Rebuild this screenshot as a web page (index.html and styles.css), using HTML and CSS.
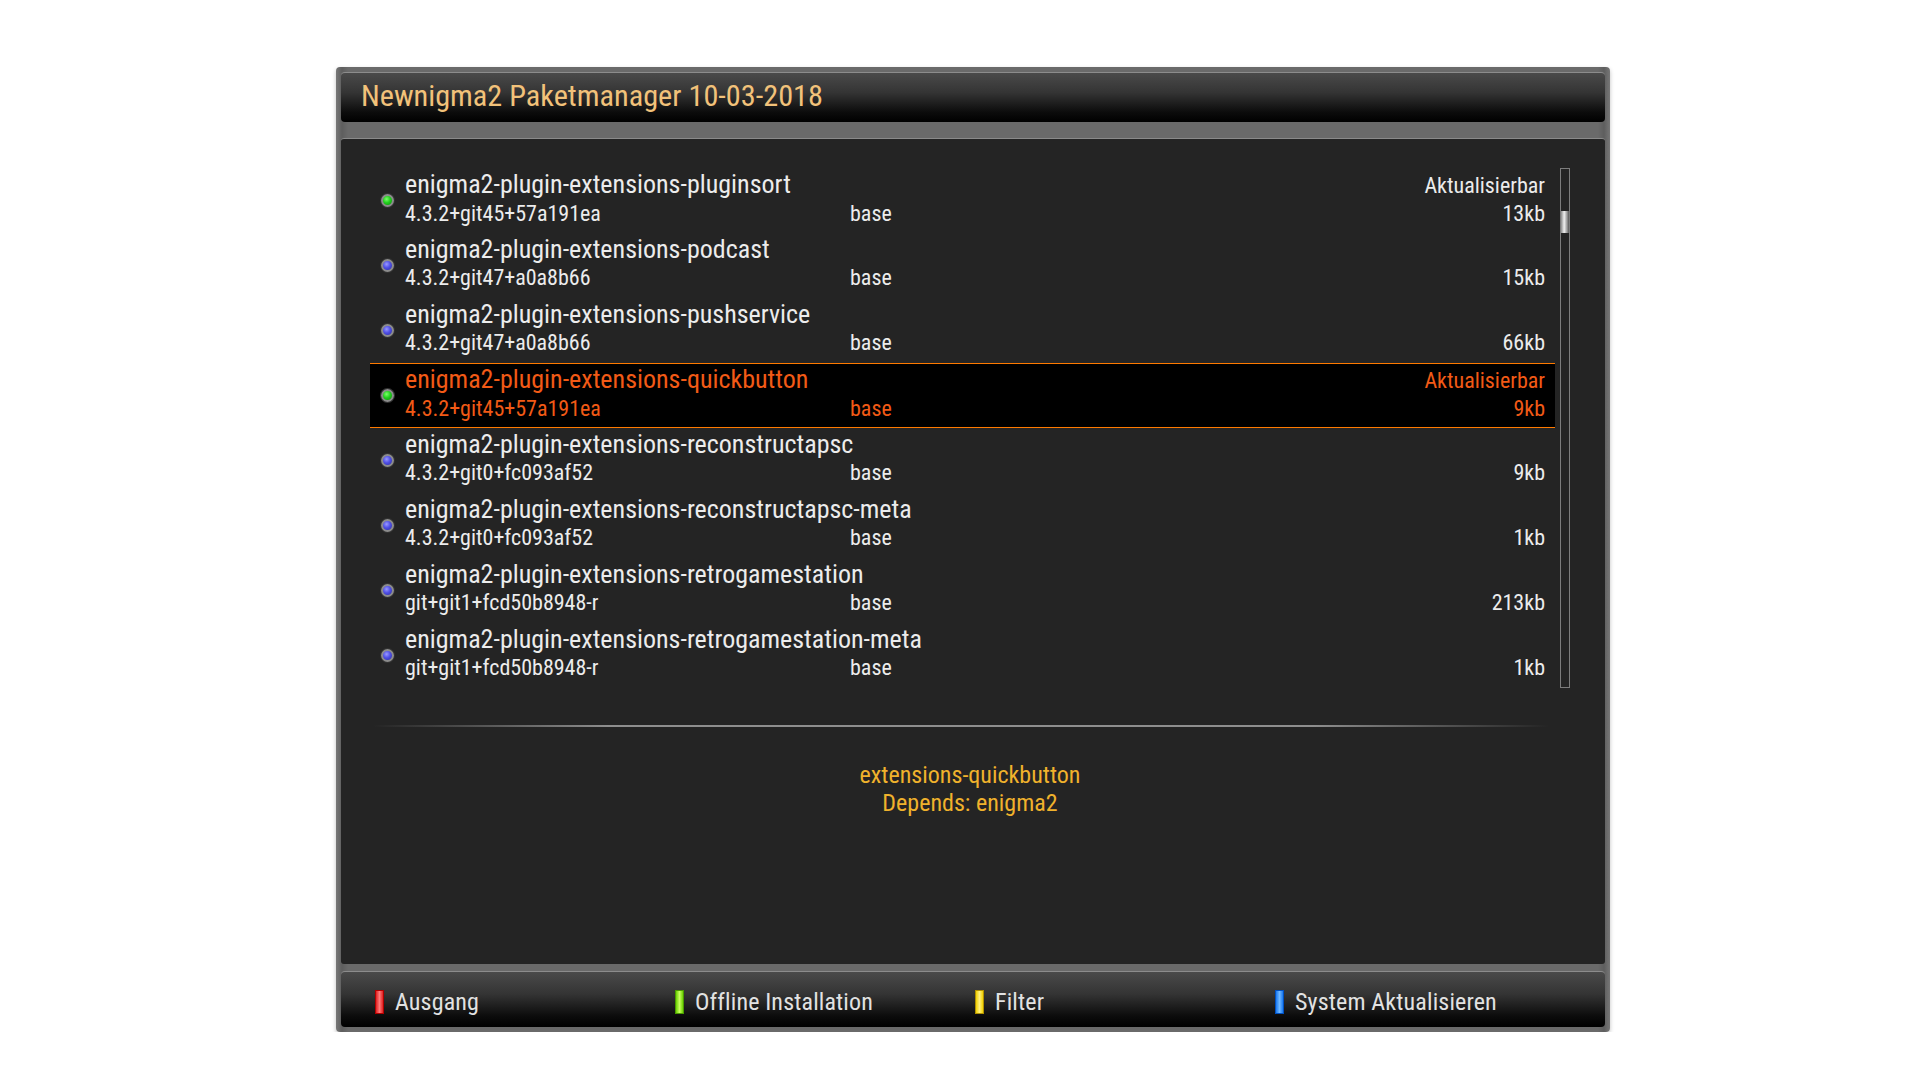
FILE: index.html
```html
<!DOCTYPE html>
<html lang="de">
<head>
  <meta charset="UTF-8">
  <title>Newnigma2 Paketmanager</title>
  <link rel="stylesheet" href="styles.css">
</head>
<body>

<div class="screen">
  <div class="titlebar">
    <h1>Newnigma2 Paketmanager 10-03-2018</h1>
  </div>

  <div class="content">
    <div class="listwrap">
      <ul class="list">
        <li class="row">
          <span class="dot green"></span>
          <div class="info">
            <div class="line1"><span class="name">enigma2-plugin-extensions-pluginsort</span><span class="status">Aktualisierbar</span></div>
            <div class="line2"><span class="version">4.3.2+git45+57a191ea</span><span class="feed">base</span><span class="size">13kb</span></div>
          </div>
        </li>
        <li class="row">
          <span class="dot blue"></span>
          <div class="info">
            <div class="line1"><span class="name">enigma2-plugin-extensions-podcast</span><span class="status"></span></div>
            <div class="line2"><span class="version">4.3.2+git47+a0a8b66</span><span class="feed">base</span><span class="size">15kb</span></div>
          </div>
        </li>
        <li class="row">
          <span class="dot blue"></span>
          <div class="info">
            <div class="line1"><span class="name">enigma2-plugin-extensions-pushservice</span><span class="status"></span></div>
            <div class="line2"><span class="version">4.3.2+git47+a0a8b66</span><span class="feed">base</span><span class="size">66kb</span></div>
          </div>
        </li>
        <li class="row selected">
          <span class="dot green"></span>
          <div class="info">
            <div class="line1"><span class="name">enigma2-plugin-extensions-quickbutton</span><span class="status">Aktualisierbar</span></div>
            <div class="line2"><span class="version">4.3.2+git45+57a191ea</span><span class="feed">base</span><span class="size">9kb</span></div>
          </div>
        </li>
        <li class="row">
          <span class="dot blue"></span>
          <div class="info">
            <div class="line1"><span class="name">enigma2-plugin-extensions-reconstructapsc</span><span class="status"></span></div>
            <div class="line2"><span class="version">4.3.2+git0+fc093af52</span><span class="feed">base</span><span class="size">9kb</span></div>
          </div>
        </li>
        <li class="row">
          <span class="dot blue"></span>
          <div class="info">
            <div class="line1"><span class="name">enigma2-plugin-extensions-reconstructapsc-meta</span><span class="status"></span></div>
            <div class="line2"><span class="version">4.3.2+git0+fc093af52</span><span class="feed">base</span><span class="size">1kb</span></div>
          </div>
        </li>
        <li class="row">
          <span class="dot blue"></span>
          <div class="info">
            <div class="line1"><span class="name">enigma2-plugin-extensions-retrogamestation</span><span class="status"></span></div>
            <div class="line2"><span class="version">git+git1+fcd50b8948-r</span><span class="feed">base</span><span class="size">213kb</span></div>
          </div>
        </li>
        <li class="row">
          <span class="dot blue"></span>
          <div class="info">
            <div class="line1"><span class="name">enigma2-plugin-extensions-retrogamestation-meta</span><span class="status"></span></div>
            <div class="line2"><span class="version">git+git1+fcd50b8948-r</span><span class="feed">base</span><span class="size">1kb</span></div>
          </div>
        </li>
      </ul>
      <div class="scrollbar"><div class="thumb"></div></div>
    </div>

    <div class="separator"></div>

    <div class="description">
      <div>extensions-quickbutton</div>
      <div>Depends: enigma2</div>
    </div>
  </div>

  <div class="buttonbar">
    <div class="button"><span class="key red"></span>Ausgang</div>
    <div class="button"><span class="key green"></span>Offline Installation</div>
    <div class="button"><span class="key yellow"></span>Filter</div>
    <div class="button"><span class="key blue"></span>System Aktualisieren</div>
  </div>
</div>

</body>
</html>
```

FILE: styles.css
```css
body {
  margin: 0;
  background: #fff;
  font-family: "Roboto Condensed", Roboto, "Liberation Sans", sans-serif;
  color: #ececec;
}
.screen {
  margin: 67px 0 0 336px;
  width: 1274px;
  height: 965px;
  box-sizing: border-box;
  padding: 5px 5px 5px 5px;
  background: linear-gradient(to right, #777 0, #5e5e5e 6px, #6a6a6a 12px, #6a6a6a calc(100% - 12px), #5e5e5e calc(100% - 6px), #777 100%);
  border-radius: 4px;
  display: flex;
  flex-direction: column;
  box-shadow: 0 2px 4px rgba(0, 0, 0, 0.25);
}
.titlebar {
  height: 50px;
  box-sizing: border-box;
  padding: 0 20px;
  border-radius: 4px;
  border-top: 1px solid #8c8c8c;
  background: linear-gradient(to bottom, #4a4a4a 0, #343434 40%, #0c0c0c 80%, #000 100%);
}
.titlebar h1 {
  margin: 0;
  font-size: 30.25px;
  font-weight: normal;
  line-height: 46px;
  color: #f2c27a;
}
.content {
  margin-top: 16px;
  height: 826px;
  box-sizing: border-box;
  border-top: 1px solid #8a8a8a;
  border-radius: 3px;
  background: #242424;
  padding: 29px 0 0 29px;
}
.listwrap {
  display: flex;
  gap: 5px;
  align-items: flex-start;
}
.list {
  list-style: none;
  margin: 0;
  padding: 0;
  width: 1185px;
}
.row {
  height: 65px;
  display: flex;
  align-items: center;
}
.row.selected {
  background: #000;
  box-shadow: inset 0 1px 0 #ff7a00, inset 0 -1px 0 #ff7a00;
  color: #f25a16;
}
.dot {
  width: 35px;
  height: 65px;
  flex: none;
  position: relative;
}
.dot::after {
  content: "";
  position: absolute;
  left: 11px;
  top: 26px;
  width: 9px;
  height: 9px;
  border-radius: 50%;
  border: 2px solid #8c8c8c;
  box-shadow: 0 0 0 1px #333;
}
.dot.green::after {
  background: radial-gradient(circle at 40% 35%, #7cff6a 0, #22d01e 45%, #0a8a0a 100%);
}
.dot.blue::after {
  background: radial-gradient(circle at 40% 35%, #9a9aff 0, #5050e6 45%, #2a2aa0 100%);
}
.info {
  flex: 1;
  height: 65px;
  box-sizing: border-box;
  padding: 2px 10px 0 0;
}
.line1 {
  display: flex;
  align-items: baseline;
  line-height: 29px;
}
.name {
  flex: 1;
  font-size: 26px;
  white-space: nowrap;
}
.status {
  font-size: 22px;
}
.line2 {
  display: flex;
  align-items: baseline;
  line-height: 28px;
  font-size: 22px;
}
.version {
  width: 445px;
}
.feed {
  flex: 1;
}
.scrollbar {
  width: 8px;
  height: 518px;
  border: 1px solid #7c7c7c;
  position: relative;
}
.thumb {
  position: absolute;
  left: 0;
  right: 0;
  top: 42px;
  height: 22px;
  background: linear-gradient(to right, #8a8a8a, #f0f0f0 40%, #9a9a9a 75%, #555);
}
.separator {
  margin: 37px 0 0 3px;
  width: 1176px;
  height: 2px;
  background: linear-gradient(to right, rgba(140, 140, 140, 0), #8e8e8e 20%, #8e8e8e 80%, rgba(140, 140, 140, 0));
}
.description {
  margin: 34px 35px 0 0;
  text-align: center;
  font-size: 24px;
  line-height: 28px;
  color: #f0b22c;
}
.buttonbar {
  margin-top: 7px;
  height: 56px;
  box-sizing: border-box;
  padding: 4px 0 0 34px;
  border-top: 1px solid #8c8c8c;
  border-radius: 4px;
  background: linear-gradient(to bottom, #4a4a4a 0, #343434 40%, #0c0c0c 80%, #000 100%);
  display: flex;
  align-items: center;
}
.button {
  width: 300px;
  display: flex;
  align-items: center;
  gap: 11px;
  font-size: 24px;
  letter-spacing: 0.15px;
  color: #e2e2e2;
}
.key {
  width: 9px;
  height: 24px;
  box-sizing: border-box;
  border: 1px solid;
}
.key.red {
  border-color: #b00000;
  background: linear-gradient(to right, #e02020, #ff7a7a 50%, #e02020);
}
.key.green {
  border-color: #4a9a00;
  background: linear-gradient(to right, #6ad000, #c8ff60 50%, #6ad000);
}
.key.yellow {
  border-color: #b09000;
  background: linear-gradient(to right, #f0d000, #fff080 50%, #f0d000);
}
.key.blue {
  border-color: #0050c0;
  background: linear-gradient(to right, #1878f0, #70b8ff 50%, #1878f0);
}
```
